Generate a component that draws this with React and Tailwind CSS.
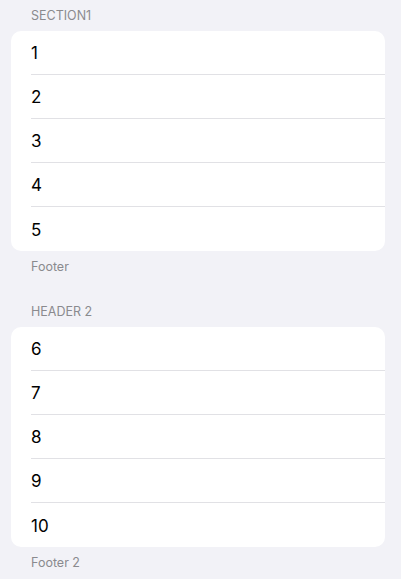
import React from "react";

const sections = [
  { header: "SECTION1", footer: "Footer", rows: ["1", "2", "3", "4", "5"] },
  { header: "HEADER 2", footer: "Footer 2", rows: ["6", "7", "8", "9", "10"] },
];

function Section({ header, footer, rows }) {
  return (
    <div>
      <div className="h-[23px] pl-[20px] text-[12.5px] leading-[16px] text-[#8a8a8e]">
        {header}
      </div>
      <div className="rounded-[10px] bg-white overflow-hidden">
        {rows.map((r, i) => (
          <div key={r} className="pl-[20px]">
            <div
              className={
                "h-[44px] flex items-center pt-[3px] text-[17px] text-black " +
                (i < rows.length - 1 ? "border-b border-[#e1e1e5]" : "")
              }
            >
              {r}
            </div>
          </div>
        ))}
      </div>
      <div className="pt-[8px] pl-[20px] text-[12.5px] leading-[16px] text-[#8a8a8e]">
        {footer}
      </div>
    </div>
  );
}

export default function App() {
  return (
    <div
      className="min-h-screen bg-[#f2f2f7] pl-[11px] pr-[16px] pt-[8px] flex flex-col gap-[29px]"
      style={{ fontFamily: "Inter, 'Noto Sans', sans-serif" }}
    >
      {sections.map((s) => (
        <Section key={s.header} {...s} />
      ))}
    </div>
  );
}
